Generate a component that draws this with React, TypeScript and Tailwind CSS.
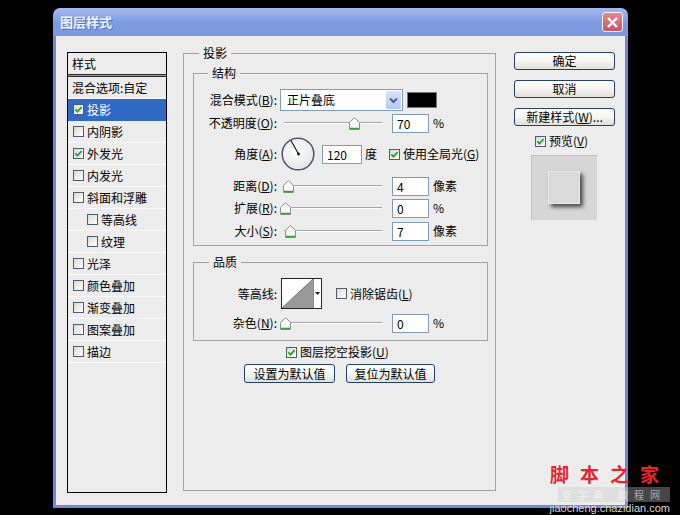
import React from 'react';

const Mn = ({ c }: { c: string }) => <span className="underline">{c}</span>;

function Check({ on }: { on?: boolean }) {
  return (
    <span className="w-[11px] h-[11px] shrink-0 border border-[#4d5d6e] bg-gradient-to-br from-[#d9d9d3] to-white flex items-center justify-center">
      {on && (
        <svg width="9" height="9" viewBox="0 0 9 9">
          <path d="M1.4 4.4 L3.5 6.6 L7.6 2.2" stroke="#21a821" strokeWidth="1.9" fill="none" />
        </svg>
      )}
    </span>
  );
}

function Slider({ left }: { left: number }) {
  return (
    <div className="relative ml-[3px] w-[108px] h-[22px] shrink-0">
      <div className="absolute left-[4px] right-[6px] top-[10px] h-[2px] border-t border-[#a4a4a4] border-b border-b-white" />
      <svg className="absolute top-[5px]" style={{ left }} width="11" height="13" viewBox="0 0 11 13">
        <path d="M0.5 5.5 L5.5 0.5 L10.5 5.5 V12.5 H0.5 Z" fill="#f5faf5" stroke="#8b968b" />
        <path d="M1 11.6 H10" stroke="#38a038" strokeWidth="1.8" />
      </svg>
    </div>
  );
}

function Num({ v, w = 'w-[37px]' }: { v: string; w?: string }) {
  return <div className={w + ' h-[19px] shrink-0 border border-[#7f9db9] bg-white pl-[4px] leading-[17px]'}>{v}</div>;
}

function Btn({ children, className }: { children: React.ReactNode; className: string }) {
  return (
    <div className={'rounded-[3px] border border-[#23416e] bg-gradient-to-b from-white via-[#f5f5f1] to-[#e0dfd8] flex items-center justify-center ' + className}>
      {children}
    </div>
  );
}

const styles = [
  { t: '投影', on: true, sel: true },
  { t: '内阴影' },
  { t: '外发光', on: true },
  { t: '内发光' },
  { t: '斜面和浮雕' },
  { t: '等高线', sub: true },
  { t: '纹理', sub: true },
  { t: '光泽' },
  { t: '颜色叠加' },
  { t: '渐变叠加' },
  { t: '图案叠加' },
  { t: '描边' },
];

export default function App() {
  return (
    <div className="relative w-[680px] h-[515px] bg-black overflow-hidden text-[12px] leading-[16px] text-black font-['Noto_Sans_CJK_SC','Liberation_Sans',sans-serif]">
      <div className="ml-[53px] pt-[8px]">
        <div className="w-[575px] h-[500px] flex flex-col rounded-t-[7px] overflow-hidden">
          {/* title bar */}
          <div className="h-[28px] shrink-0 flex items-center justify-between pl-[7px] pr-[5px] bg-gradient-to-b from-[#a3b8ef] via-[#7f9ce2] to-[#7c99e0]">
            <span className="text-[13px] font-bold text-[#eef2ff] [text-shadow:1px_1px_0_#5571c0]">图层样式</span>
            <div className="w-[21px] h-[20px] rounded-[3px] border border-[#f2f2f2] bg-gradient-to-b from-[#e08a92] to-[#c55563] flex items-center justify-center">
              <svg width="13" height="13" viewBox="0 0 13 13">
                <path d="M2 2 L11 11 M11 2 L2 11" stroke="white" strokeWidth="2.4" />
              </svg>
            </div>
          </div>

          {/* client */}
          <div className="flex-1 flex border-x-[3px] border-b-[3px] border-[#7387d6] bg-[#ececec]">
            {/* style list */}
            <div className="ml-[11px] mt-[16px] w-[100px] h-[441px] shrink-0 border border-black flex flex-col">
              <div className="h-[21px] flex items-center pl-[4px]">样式</div>
              <div className="h-[3px] border-y border-[#2a2a2a] bg-[#9a9a9a]" />
              <div className="h-[22px] flex items-center pl-[4px] border-b border-[#fafafa]">混合选项:自定</div>
              {styles.map((s) => (
                <div
                  key={s.t}
                  className={
                    'h-[22px] flex items-center gap-[3px] border-b ' +
                    (s.sub ? 'pl-[19px] ' : 'pl-[5px] ') +
                    (s.sel ? 'bg-[#316ac5] text-white border-[#316ac5]' : 'border-[#fafafa]')
                  }
                >
                  <Check on={s.on} />
                  <span>{s.t}</span>
                </div>
              ))}
            </div>

            {/* main */}
            <fieldset className="ml-[16px] mt-[9px] w-[313px] h-[446px] shrink-0 border border-[#a3a3a3] pl-[9px] pt-[4px]">
              <legend className="ml-[6px] px-[4px] leading-[16px]">投影</legend>

              <fieldset className="w-[295px] border border-[#a3a3a3] pt-[8px] pb-[3px]">
                <legend className="ml-[14px] px-[4px] leading-[16px]">结构</legend>

                <div className="h-[22px] flex items-center">
                  <span className="w-[83px] shrink-0 text-right">混合模式(<Mn c="B" />):</span>
                  <div className="ml-[3px] w-[123px] h-[22px] border border-[#7f9db9] bg-white flex items-center">
                    <span className="flex-1 pl-[6px]">正片叠底</span>
                    <div className="w-[17px] h-[20px] border border-white rounded-[2px] bg-gradient-to-b from-[#d6e2fe] to-[#b4c8f6] flex items-center justify-center">
                      <svg width="9" height="7" viewBox="0 0 9 7">
                        <path d="M1 1.5 L4.5 5 L8 1.5" stroke="#4d6185" strokeWidth="2" fill="none" />
                      </svg>
                    </div>
                  </div>
                  <div className="ml-[4px] w-[30px] h-[16px] bg-black border border-[#777]" />
                </div>

                <div className="mt-[1px] h-[22px] flex items-center">
                  <span className="w-[83px] shrink-0 text-right">不透明度(<Mn c="O" />):</span>
                  <Slider left={69} />
                  <div className="ml-[4px]"><Num v="70" /></div>
                  <span className="ml-[4px]">%</span>
                </div>

                <div className="mt-[3px] h-[34px] flex items-center">
                  <span className="w-[83px] shrink-0 text-right">角度(<Mn c="A" />):</span>
                  <svg className="ml-[4px] shrink-0" width="34" height="34" viewBox="0 0 34 34">
                    <defs>
                      <radialGradient id="dialg" cx="45%" cy="40%" r="60%">
                        <stop offset="0" stopColor="#ffffff" />
                        <stop offset="1" stopColor="#e4e6ea" />
                      </radialGradient>
                    </defs>
                    <circle cx="17" cy="17" r="15.8" fill="url(#dialg)" stroke="#4c546c" strokeWidth="1.5" />
                    <path d="M17.5 17 L10 3.5" stroke="#111" strokeWidth="1.1" />
                    <circle cx="17.5" cy="17" r="1.4" fill="#111" />
                  </svg>
                  <div className="ml-[7px]"><Num v="120" w="w-[40px]" /></div>
                  <span className="ml-[3px]">度</span>
                  <span className="ml-[12px]"><Check on /></span>
                  <span className="ml-[3px]">使用全局光(<Mn c="G" />)</span>
                </div>

                <div className="mt-[4px] h-[22px] flex items-center">
                  <span className="w-[83px] shrink-0 text-right">距离(<Mn c="D" />):</span>
                  <Slider left={3} />
                  <div className="ml-[4px]"><Num v="4" /></div>
                  <span className="ml-[4px]">像素</span>
                </div>

                <div className="h-[22px] flex items-center">
                  <span className="w-[83px] shrink-0 text-right">扩展(<Mn c="R" />):</span>
                  <Slider left={0} />
                  <div className="ml-[4px]"><Num v="0" /></div>
                  <span className="ml-[4px]">%</span>
                </div>

                <div className="mt-[1px] h-[22px] flex items-center">
                  <span className="w-[83px] shrink-0 text-right">大小(<Mn c="S" />):</span>
                  <Slider left={5} />
                  <div className="ml-[4px]"><Num v="7" /></div>
                  <span className="ml-[4px]">像素</span>
                </div>
              </fieldset>

              <fieldset className="mt-[8px] w-[295px] border border-[#a3a3a3] pt-[8px] pb-[6px]">
                <legend className="ml-[15px] px-[4px] leading-[16px]">品质</legend>

                <div className="h-[31px] flex items-center">
                  <span className="w-[83px] shrink-0 text-right">等高线:</span>
                  <div className="ml-[4px] w-[41px] h-[31px] border border-[#222] bg-white flex">
                    <svg width="31" height="29" viewBox="0 0 31 29">
                      <path d="M0 29 L31 0 L31 29 Z" fill="#999" />
                      <path d="M0 29 L31 0" stroke="#666" strokeWidth="0.8" />
                    </svg>
                    <div className="flex-1 border-l border-[#888] flex items-center justify-center">
                      <svg width="5" height="3" viewBox="0 0 5 3">
                        <path d="M0 0 H5 L2.5 3 Z" fill="#111" />
                      </svg>
                    </div>
                  </div>
                  <span className="ml-[14px]"><Check /></span>
                  <span className="ml-[3px]">消除锯齿(<Mn c="L" />)</span>
                </div>

                <div className="mt-[3px] h-[22px] flex items-center">
                  <span className="w-[83px] shrink-0 text-right">杂色(<Mn c="N" />):</span>
                  <Slider left={0} />
                  <div className="ml-[4px]"><Num v="0" /></div>
                  <span className="ml-[4px]">%</span>
                </div>
              </fieldset>

              <div className="mt-[2px] h-[18px] flex items-center ml-[93px] gap-[3px]">
                <Check on />
                <span>图层挖空投影(<Mn c="U" />)</span>
              </div>

              <div className="mt-[3px] flex ml-[51px] gap-[11px]">
                <Btn className="w-[91px] h-[19px]">设置为默认值</Btn>
                <Btn className="w-[89px] h-[19px]">复位为默认值</Btn>
              </div>
            </fieldset>

            {/* right column */}
            <div className="ml-[18px] pt-[16px] w-[101px] shrink-0 flex flex-col">
              <Btn className="h-[18px]">确定</Btn>
              <Btn className="mt-[10px] h-[18px]">取消</Btn>
              <Btn className="mt-[10px] h-[18px]">新建样式(<Mn c="W" />)...</Btn>
              <div className="mt-[7px] h-[16px] flex items-center ml-[21px] gap-[3px]">
                <Check on />
                <span>预览(<Mn c="V" />)</span>
              </div>
              <div className="mt-[6px] ml-[17px] w-[66px] h-[65px] bg-[#d6d6d6] border-t border-l border-[#c0c0c0] pl-[16px] pt-[15px]">
                <div className="w-[32px] h-[33px] bg-[#dadada] border border-[#e8e8e8] shadow-[3px_3px_4px_rgba(0,0,0,0.65)]" />
              </div>
            </div>
          </div>
        </div>
      </div>

      {/* watermark */}
      <div className="absolute right-[10px] top-[460px] flex flex-col items-end">
        <span className="h-[27px] text-[19px] leading-[27px] font-bold tracking-[11px] text-[#e5262c]">脚本之家</span>
        <span className="h-[15px] px-[4px] bg-[rgba(200,200,200,0.35)] text-[10px] leading-[15px] tracking-[6px] text-[rgba(255,255,255,0.55)]">查字典 教程网</span>
        <span className="h-[13px] text-[11px] leading-[13px] text-[#d8d8d8] font-['Liberation_Sans',sans-serif]">jiaocheng.chazidian.com</span>
      </div>
    </div>
  );
}
